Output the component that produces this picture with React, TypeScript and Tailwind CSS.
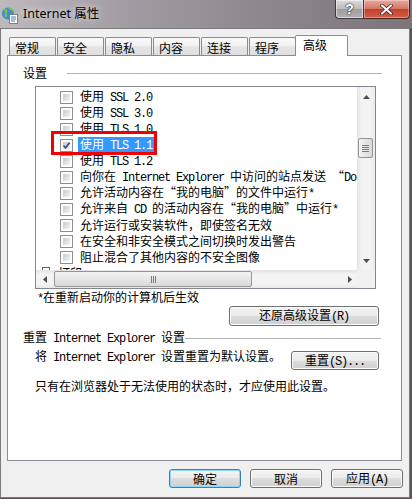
import React from 'react';

const CJK = "font-['Noto_Sans_CJK_SC',sans-serif]";

// latin runs in the dialog are rendered half-width, like SimSun
const Mixed = ({ text }: { text: string }) => (
  <>
    {text.split(/([\x20-\x7e]+)/).map((part, i) =>
      /^[\x20-\x7e]+$/.test(part) ? (
        <span key={i} className="font-['Liberation_Mono',monospace] text-[12px] tracking-[-1.2px] whitespace-pre">
          {part}
        </span>
      ) : (
        <span key={i}>{part}</span>
      )
    )}
  </>
);

const Checkbox = ({ checked }: { checked?: boolean }) => (
  <div className="relative w-[13px] h-[13px] shrink-0 border border-[#8e8f8f] bg-white p-[2px]">
    <div className="w-full h-full bg-linear-to-br from-[#c3c7cd] to-[#f6f6f6]" />
    {checked && (
      <svg className="absolute left-0 top-0" width="11" height="11" viewBox="0 0 11 11">
        <path d="M2.5 5.5 L4.5 7.8 L8.6 2.6" fill="none" stroke="#3b4f8c" strokeWidth="1.7" />
      </svg>
    )}
  </div>
);

const Row = ({ text, checked, selected }: { text: string; checked?: boolean; selected?: boolean }) => (
  <div className="h-[16px] flex items-center pl-[24px] whitespace-nowrap">
    <Checkbox checked={checked} />
    <span className={`ml-[5px] px-[2px] leading-[14px] ${selected ? 'bg-[#3399ff] text-white' : ''}`}>
      <Mixed text={text} />
    </span>
  </div>
);

const Btn = ({ label, className, primary }: { label: string; className: string; primary?: boolean }) => (
  <div
    className={`${className} flex items-center justify-center rounded-[3px] border bg-[linear-gradient(#f3f3f3_0%,#ebebeb_50%,#dddddd_50%,#d0d0d0_100%)] leading-none ${
      primary ? 'border-[#3c7fb1] shadow-[inset_0_0_0_1px_#8fd6f8]' : 'border-[#707070] shadow-[inset_0_0_0_1px_#fbfbfb]'
    }`}
  >
    <span className="leading-[14px]">
      <Mixed text={label} />
    </span>
  </div>
);

const Tri = ({ dir }: { dir: 'up' | 'down' | 'left' | 'right' }) => {
  const d = {
    up: 'M0 4 L3.5 0 L7 4 Z',
    down: 'M0 0 L7 0 L3.5 4 Z',
    left: 'M4 0 L4 7 L0 3.5 Z',
    right: 'M0 0 L4 3.5 L0 7 Z',
  }[dir];
  const vertical = dir === 'up' || dir === 'down';
  return (
    <svg width={vertical ? 7 : 4} height={vertical ? 4 : 7} viewBox={vertical ? '0 0 7 4' : '0 0 4 7'}>
      <path d={d} fill="#4e4e4e" />
    </svg>
  );
};

const GlobeIcon = () => (
  <svg width="18" height="18" viewBox="0 0 18 18" className="ml-[1px] mt-[2px]">
    <circle cx="7" cy="7.5" r="6" fill="#3f8fd0" />
    <path d="M3 4.5 C5 3 6 5 5 6.5 C4 8 6 9 4.5 11 M8 2 C9.5 3.5 11 3 12 5" fill="none" stroke="#7dc24a" strokeWidth="2" />
    <rect x="8.5" y="8.5" width="8" height="9" fill="#fff" stroke="#6f7f95" strokeWidth="1" />
    <path d="M10 11 H15 M10 13 H15 M10 15 H14" stroke="#4a78b8" strokeWidth="1" />
  </svg>
);

const tabs = ['常规', '安全', '隐私', '内容', '连接', '程序'];

const rows: { text: string; checked?: boolean; selected?: boolean }[] = [
  { text: '使用 SSL 2.0' },
  { text: '使用 SSL 3.0' },
  { text: '使用 TLS 1.0' },
  { text: '使用 TLS 1.1', checked: true, selected: true },
  { text: '使用 TLS 1.2' },
  { text: '向你在 Internet Explorer 中访问的站点发送 “Do Not Track” 请求' },
  { text: '允许活动内容在“我的电脑”的文件中运行*' },
  { text: '允许来自 CD 的活动内容在“我的电脑”中运行*' },
  { text: '允许运行或安装软件，即使签名无效' },
  { text: '在安全和非安全模式之间切换时发出警告' },
  { text: '阻止混合了其他内容的不安全图像' },
];

export default function App() {
  return (
    <div className={`w-[412px] h-[499px] overflow-hidden bg-[#5d5658] ${CJK} text-[12px] text-black`}>
      {/* title bar */}
      <div className="relative h-[28px] flex items-center bg-[linear-gradient(90deg,#bdb9bd_0%,#a29da2_30%,#8d878c_65%,#7b7478_100%)]">
        <GlobeIcon />
        <span className="ml-[4px] font-['Noto_Sans','Noto_Sans_CJK_SC',sans-serif] text-[12.5px] [text-shadow:0_0_6px_rgba(255,255,255,0.9)]">
          Internet 属性
        </span>
        <div className="absolute top-0 right-[2px] flex">
          <div className="w-[29px] h-[19px] rounded-bl-[4px] border border-t-0 border-[#3f3b3e] bg-[linear-gradient(#dcdadc_0%,#bdbabd_50%,#a09ca0_50%,#b3afb3_100%)] shadow-[inset_0_0_0_1px_rgba(255,255,255,0.5)] flex items-center justify-center">
            <span className="font-['Liberation_Sans',sans-serif] font-bold text-[14px] leading-none text-white [text-shadow:0_0_2px_#222,0_0_1px_#000]">?</span>
          </div>
          <div className="w-[46px] h-[19px] rounded-br-[4px] border border-l-0 border-t-0 border-[#3f2320] bg-[linear-gradient(#e9a99c_0%,#d47565_50%,#c23e2a_50%,#d0604a_100%)] shadow-[inset_0_0_0_1px_rgba(255,255,255,0.35)] flex items-center justify-center">
            <svg width="13" height="11" viewBox="0 0 13 11">
              <path d="M2 1.5 L11 9.5 M11 1.5 L2 9.5" stroke="#3a1a16" strokeWidth="3.6" strokeLinecap="round" />
              <path d="M2 1.5 L11 9.5 M11 1.5 L2 9.5" stroke="#ffffff" strokeWidth="2.2" strokeLinecap="round" />
            </svg>
          </div>
        </div>
      </div>

      {/* client area */}
      <div className="w-[410px] h-[470px] bg-[#f0f0f0] border border-[#7a7a7a] flex flex-col">
        <div className="pt-[6px] pl-[8px]">
          <div className="h-[20px] flex items-end gap-px">
            {tabs.map((t) => (
              <div
                key={t}
                className="w-[47px] h-[18px] pl-[5px] pt-[2px] leading-[16px] border border-b-0 border-[#898c95] rounded-t-[2px] bg-[linear-gradient(#fafafa_0%,#f0f0f0_50%,#e5e5e5_50%,#dedede_100%)]"
              >
                {t}
              </div>
            ))}
            <div className="relative z-10 -ml-[2px] -mb-px w-[53px] h-[21px] pl-[7px] pt-[1px] leading-[16px] border border-b-0 border-[#898c95] rounded-t-[2px] bg-white">
              高级
            </div>
          </div>
        </div>

        {/* tab page */}
        <div className="ml-[6px] w-[395px] h-[406px] border border-[#898c95] bg-white pl-[15px] pt-[9px]">
          <div className="h-[16px] flex items-center leading-[16px]">
            <span>设置</span>
            <div className="ml-[20px] w-[315px] h-px bg-[#b4b4b4]" />
          </div>

          {/* settings list */}
          <div className="mt-[5px] ml-[12px] w-[341px] h-[203px] border border-[#828790] grid grid-cols-[1fr_18px] grid-rows-[1fr_18px]">
            <div className="relative overflow-hidden pt-[2px]">
              {rows.map((r) => (
                <Row key={r.text} {...r} />
              ))}
              <div className="h-[16px] flex items-center pl-[4px] whitespace-nowrap">
                <svg width="12" height="12" viewBox="0 0 12 12">
                  <rect x="2.5" y="0.5" width="7" height="5" fill="#fff" stroke="#666" />
                  <rect x="0.5" y="5.5" width="11" height="5" fill="#d8d8d8" stroke="#666" />
                </svg>
                <span className="ml-[6px]">打印</span>
              </div>
              {/* red annotation box */}
              <div className="absolute left-[15px] top-[44px] w-[106px] h-[24px] border-[3px] border-[#f00000]" />
            </div>

            {/* vertical scrollbar */}
            <div className="flex flex-col bg-[linear-gradient(90deg,#e3e3e3_0%,#f3f3f3_25%,#f3f3f3_75%,#e9e9e9_100%)]">
              <div className="h-[17px] flex items-center justify-center pt-[3px]">
                <Tri dir="up" />
              </div>
              <div className="h-[34px]" />
              <div className="ml-[1px] w-[15px] h-[20px] rounded-[2px] border border-[#959595] bg-linear-to-r from-[#f4f4f4] to-[#d9d9d9] flex flex-col items-center justify-center gap-px">
                <div className="w-[7px] h-px bg-[#7b7b7b]" />
                <div className="w-[7px] h-px bg-[#7b7b7b]" />
                <div className="w-[7px] h-px bg-[#7b7b7b]" />
                <div className="w-[7px] h-px bg-[#7b7b7b]" />
              </div>
              <div className="flex-1" />
              <div className="h-[17px] flex items-center justify-center pb-[2px]">
                <Tri dir="down" />
              </div>
            </div>

            {/* horizontal scrollbar */}
            <div className="flex items-center bg-[linear-gradient(#e3e3e3_0%,#f3f3f3_25%,#f3f3f3_75%,#e9e9e9_100%)]">
              <div className="w-[17px] flex justify-center">
                <Tri dir="left" />
              </div>
              <div className="ml-[1px] w-[198px] h-[16px] rounded-[2px] border border-[#959595] bg-linear-to-b from-[#f4f4f4] to-[#d9d9d9] flex items-center justify-center gap-px">
                <div className="w-px h-[7px] bg-[#7b7b7b]" />
                <div className="w-px h-[7px] bg-[#7b7b7b]" />
                <div className="w-px h-[7px] bg-[#7b7b7b]" />
              </div>
              <div className="flex-1" />
              <div className="w-[17px] flex justify-center pl-[3px]">
                <Tri dir="right" />
              </div>
            </div>
            <div className="bg-[#f0f0f0]" />
          </div>

          <div className="ml-[14px] h-[16px] leading-[16px]">
            <Mixed text="*在重新启动你的计算机后生效" />
          </div>
          <Btn label="还原高级设置(R)" className="mt-[1px] ml-[206px] w-[150px] h-[20px]" />

          <div className="mt-[4px] h-[16px] flex items-center leading-[16px]">
            <span className="whitespace-nowrap">
              <Mixed text="重置 Internet Explorer 设置" />
            </span>
            <div className="w-[196px] h-px bg-[#b4b4b4]" />
          </div>
          <div className="mt-[2px] flex items-start">
            <span className="ml-[12px] w-[256px] leading-[16px] whitespace-nowrap">
              <Mixed text="将 Internet Explorer 设置重置为默认设置。" />
            </span>
            <Btn label="重置(S)..." className="mt-[3px] w-[88px] h-[19px]" />
          </div>
          <div className="mt-[8px] ml-[12px] leading-[16px]">
            <Mixed text="只有在浏览器处于无法使用的状态时，才应使用此设置。" />
          </div>
        </div>

        {/* dialog buttons */}
        <div className="mt-[8px] pr-[6px] flex justify-end gap-[9px]">
          <Btn label="确定" primary className="w-[72px] h-[19px]" />
          <Btn label="取消" className="w-[72px] h-[19px]" />
          <Btn label="应用(A)" className="w-[72px] h-[19px]" />
        </div>
      </div>
    </div>
  );
}
